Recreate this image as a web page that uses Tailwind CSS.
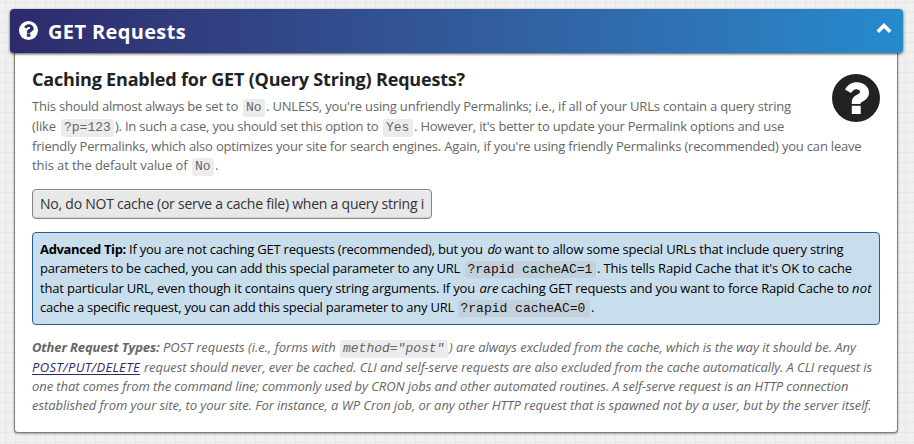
<!DOCTYPE html>
<html lang="en">
<head>
<meta charset="utf-8">
<title>GET Requests</title>
<script src="https://cdn.jsdelivr.net/npm/@tailwindcss/browser@4"></script>
</head>
<body class="h-[444px] overflow-hidden bg-[#f0f0f0] bg-[linear-gradient(#e7e7e7_1px,transparent_1px),linear-gradient(90deg,#e7e7e7_1px,transparent_1px)] bg-[size:10px_10px] bg-[position:5px_2px] px-[10px] pt-[9px] font-['Open_Sans','Noto_Sans',sans-serif] text-[13px] text-[#666] [&_span]:shrink-0 [&_code]:shrink-0 [&_code]:font-['Liberation_Mono',monospace]">
  <header class="relative z-10 flex h-[44px] w-[893px] rounded-[4px] bg-linear-to-r from-[#2d2a6b] to-[#248bcd] pt-[12px] pl-[9px] text-white shadow-[0_1px_3px_rgba(0,0,0,0.7)]">
    <svg class="h-[19px] w-[19px]" viewBox="0 0 48 48">
      <circle cx="24" cy="24" r="24" fill="#fff"/>
      <path d="M13 15.500C15.500 10.800 19.500 8.200 25 8.200c6.500 0 12 4.300 12 10.300 0 4.500-2.500 6.800-5.800 8.700-2 1.100-2.700 1.500-2.700 2.800h-8.700v-1.500c0-3.800 1.700-5.800 4.700-7.400 2.200-1.200 3.500-1.900 3.500-3.400 0-1.500-1.700-2.500-3.700-2.500-2.300 0-3.500 1.200-5.300 3.900zM19.800 31.800h8.900V40h-8.900z" fill="#2d2b6c"/>
    </svg>
    <h2 class="ml-[10px] -mt-[3px] text-[20px] leading-[28px] font-bold tracking-[0.361px] whitespace-nowrap">GET Requests</h2>
    <svg class="mt-[1px] mr-[11px] ml-auto h-[12px] w-[16px]" viewBox="0 0 16 12"><path d="M1.800 9.800 8 3.600l6.200 6.200" fill="none" stroke="#fff" stroke-width="3.600"/></svg>
  </header>
  <main class="ml-[4px] flex h-[380px] w-[884px] flex-col rounded-b-[4px] border border-t-0 border-[#7e7e7e] bg-white px-[17px] shadow-[0_1px_2px_rgba(0,0,0,0.35)]">
    <div class="flex h-[129px] justify-between">
      <section class="w-[830px] pt-[13px]">
        <h3 class="mb-[4px] h-[26px] text-[18px] leading-[26px] font-bold tracking-[-0.187px] whitespace-nowrap text-[#222]">Caching Enabled for GET (Query String) Requests?</h3>
        <div class="leading-[20px] whitespace-nowrap [&_code]:mt-[3px] [&_code]:h-[18px] [&_code]:rounded-[3px] [&_code]:bg-[#ececec] [&_code]:pl-[3px] [&_code]:leading-[17px]">
          <p class="flex h-[19.8px]"><span class="w-[211px] tracking-[-0.217px]">This should almost always be set to</span><code class="w-[22px]">No</code><span class="pl-[1px] tracking-[-0.183px]">. UNLESS, you're using unfriendly Permalinks; i.e., if all of your URLs contain a query string</span></p>
          <p class="flex h-[19.8px]"><span class="w-[29px] tracking-[-0.106px]">(like</span><code class="w-[53px]">?p=123</code><span class="w-[269px] pl-[1px] tracking-[-0.223px]">). In such a case, you should set this option to</span><code class="w-[30px]">Yes</code><span class="pl-[1px] tracking-[-0.206px]">. However, it's better to update your Permalink options and use</span></p>
          <p class="flex h-[19.8px]"><span class="tracking-[-0.195px]">friendly Permalinks, which also optimizes your site for search engines. Again, if you're using friendly Permalinks (recommended) you can leave</span></p>
          <p class="flex h-[19.8px]"><span class="w-[160px] tracking-[-0.087px]">this at the default value of</span><code class="w-[22px]">No</code><span class="pl-[1px]">.</span></p>
        </div>
      </section>
      <svg class="mt-[21px] -ml-[30px] h-[48px] w-[48px] shrink-0" viewBox="0 0 48 48">
        <circle cx="24" cy="24" r="24" fill="#222"/>
        <path d="M13 15.500C15.500 10.800 19.500 8.200 25 8.200c6.500 0 12 4.300 12 10.300 0 4.500-2.500 6.800-5.800 8.700-2 1.100-2.700 1.500-2.700 2.800h-8.700v-1.500c0-3.800 1.700-5.800 4.700-7.400 2.200-1.200 3.500-1.900 3.500-3.400 0-1.500-1.700-2.500-3.700-2.500-2.300 0-3.500 1.200-5.300 3.900zM19.800 31.800h8.900V40h-8.900z" fill="#fff"/>
      </svg>
    </div>
    <div class="mt-[7px] h-[30px] w-[400px] shrink-0 rounded-[4px] border border-[#858585] bg-[#e8e8e8] px-[7px] text-[14px] leading-[28px] tracking-[-0.23px] text-[#333] shadow-[inset_0_1px_0_#f5f5f5,inset_0_-1px_1px_#ccc]">
      <div class="w-[385px] overflow-hidden whitespace-nowrap">No, do NOT cache (or serve a cache file) when a query string i</div>
    </div>
    <section class="mt-[13px] h-[93px] w-[848px] shrink-0 rounded-[4px] border border-[#20609b] bg-[#c9deec] pt-[6px] pl-[7px] leading-[20px] whitespace-nowrap text-black [&_code]:mt-[3px] [&_code]:h-[17px] [&_code]:rounded-[3px] [&_code]:bg-[#c4d1dc] [&_code]:pl-[2.5px] [&_code]:leading-[17px] [&_code]:text-[#111]">
      <p class="flex h-[19.4px]"><b class="w-[89px] shrink-0 tracking-[-0.338px]">Advanced Tip:</b><span class="w-[358.500px] tracking-[-0.225px]">If you are not caching GET requests (recommended), but you</span><i class="w-[17px] shrink-0 tracking-[-0.414px]">do</i><span class="tracking-[-0.152px]">want to allow some special URLs that include query string</span></p>
      <p class="flex h-[19.4px]"><span class="w-[425px] tracking-[-0.259px]">parameters to be cached, you can add this special parameter to any URL</span><code class="w-[131px]">?rapid cacheAC=1</code><span class="pl-[1px] tracking-[-0.138px]">. This tells Rapid Cache that it's OK to cache</span></p>
      <p class="flex h-[19.4px]"><span class="w-[439.500px] tracking-[-0.178px]">that particular URL, even though it contains query string arguments. If you</span><i class="w-[21.500px] shrink-0">are</i><span class="w-[351px] tracking-[-0.195px]">caching GET requests and you want to force Rapid Cache to</span><i class="tracking-[0.2px]">not</i></p>
      <p class="flex h-[19.4px]"><span class="w-[418px] tracking-[-0.236px]">cache a specific request, you can add this special parameter to any URL</span><code class="w-[132px]">?rapid cacheAC=0</code><span class="pl-[1px]">.</span></p>
    </section>
    <section class="mt-[12px] leading-[20px] whitespace-nowrap italic [&_code]:mt-[3px] [&_code]:h-[18px] [&_code]:rounded-[3px] [&_code]:bg-[#ececec] [&_code]:pl-[3px] [&_code]:leading-[17px]">
      <p class="flex h-[19.6px]"><b class="w-[131px] shrink-0 tracking-[-0.13px]">Other Request Types:</b><span class="w-[177px]">POST requests (i.e., forms with</span><code class="w-[108px]">method="post"</code><span class="pl-[1px] tracking-[-0.036px]">) are always excluded from the cache, which is the way it should be. Any</span></p>
      <p class="flex h-[19.4px]"><span class="w-[112px]"><a class="tracking-[0.327px] text-[#2d2a6b] underline underline-offset-2">POST/PUT/DELETE</a></span><span class="tracking-[-0.079px]">request should never, ever be cached. CLI and self-serve requests are also excluded from the cache automatically. A CLI request is</span></p>
      <p class="flex h-[19.4px]"><span class="tracking-[-0.081px]">one that comes from the command line; commonly used by CRON jobs and other automated routines. A self-serve request is an HTTP connection</span></p>
      <p class="flex h-[19.4px]"><span class="tracking-[-0.055px]">established from your site, to your site. For instance, a WP Cron job, or any other HTTP request that is spawned not by a user, but by the server itself.</span></p>
    </section>
  </main>
</body>
</html>
